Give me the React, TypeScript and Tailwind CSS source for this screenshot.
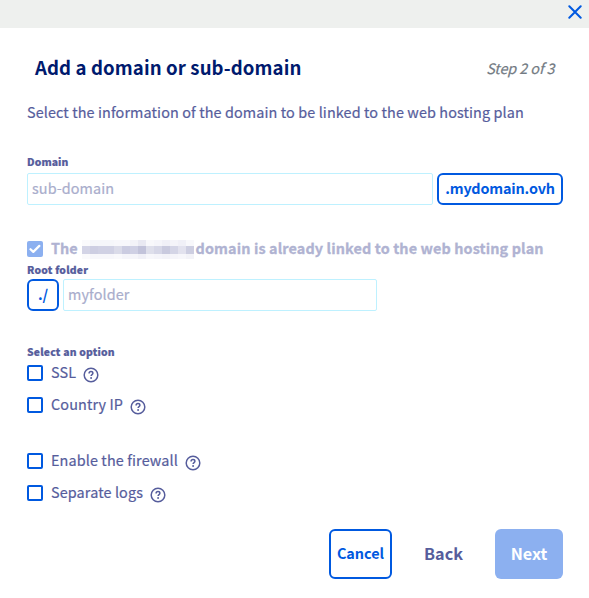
import React from "react";

const mosaic: string[][] = [
  ["bg-[#fafafc]", "bg-[#f5f6fa]", "bg-[#f5f6fa]", "bg-[#f5f6fa]", "bg-[#f7f7fb]", "bg-[#f7f7fb]", "bg-[#f3f3f8]", "bg-[#e9e9f2]", "bg-[#f8f8fb]", "bg-[#f5f5fa]", "bg-[#f0f0f7]", "bg-[#f4f4f9]", "bg-[#f0f0f7]", "bg-[#f8f8fb]"],
  ["bg-[#d3d4e6]", "bg-[#cdcee2]", "bg-[#d0d1e4]", "bg-[#d0d1e4]", "bg-[#dadbe9]", "bg-[#cbcce1]", "bg-[#cfd0e4]", "bg-[#c2c3da]", "bg-[#dedfeb]", "bg-[#d6d7e7]", "bg-[#c9cade]", "bg-[#d4d5e6]", "bg-[#e2e2ee]", "bg-[#cdcee1]"],
  ["bg-[#fafafc]", "bg-[#f7f7fb]", "bg-[#f7f7fb]", "bg-[#f7f7fb]", "bg-[#f9f9fc]", "bg-[#f5f5fa]", "bg-[#f5f5fa]", "bg-[#f0f0f7]", "bg-[#f7f7fb]", "bg-[#f5f5fa]", "bg-[#f3f3f8]", "bg-[#f5f5fa]", "bg-[#f7f7fb]", "bg-[#f3f3f8]"],
];

function HelpIcon() {
  return (
    <svg width="16" height="16" viewBox="0 0 16 16" fill="none" stroke="#565d9c" strokeWidth="1.5" className="mt-[3px]">
      <circle cx="8" cy="8" r="6.8" />
      <path d="M6.1 6.4C6.1 5.2 6.9 4.6 8 4.6s1.9.7 1.9 1.7c0 1.3-1.8 1.3-1.8 2.7" strokeWidth="1.5" />
      <circle cx="8.1" cy="11" r=".95" fill="#565d9c" stroke="none" />
    </svg>
  );
}

function Option({ label }: { label: string }) {
  return (
    <label className="flex h-8 items-center">
      <span className="size-4 rounded-[2px] border-2 border-[#0059e0]" />
      <span className="ml-2 mr-[7px] pb-0.5 text-[14.4px] tracking-[0.12px] [-webkit-text-stroke:0.2px]">{label}</span>
      <HelpIcon />
    </label>
  );
}

export default function App() {
  return (
    <div className="h-[598px] w-[589px] bg-white font-['Noto_Sans_CJK_SC',sans-serif] leading-6 text-[#565d9c]">
      <header className="flex h-7 items-start justify-end bg-[#eef0ee] pr-[7px] pt-[5px]">
        <svg width="14" height="14" viewBox="0 0 14 14" stroke="#0059e0" strokeWidth="2" strokeLinecap="round">
          <path d="M1.3 1.3l11.4 11.4M12.7 1.3L1.3 12.7" />
        </svg>
      </header>
      <main className="pl-[27px] pr-[26px]">
        <div className="flex h-[72px] items-center justify-between pl-2 pr-[8.5px] pt-[7px]">
          <h1 className="pb-0.5 text-[18.6px] font-bold tracking-[0.11px] text-[#001a6e]">Add a domain or sub-domain</h1>
          <span className="text-[14.4px] italic tracking-[-0.1px] text-[#737b83] [-webkit-text-stroke:0.2px]">Step 2 of 3</span>
        </div>
        <p className="whitespace-nowrap text-[14.4px] tracking-[0.11px] [-webkit-text-stroke:0.2px]">Select the information of the domain to be linked to the web hosting plan</p>
        <div className="mt-7 h-[21px] text-[10.4px] font-black leading-[19px] tracking-[0.1px] [-webkit-text-stroke:0.2px]">Domain</div>
        <div className="flex h-8 gap-1">
          <input placeholder="sub-domain" className="w-[406px] rounded-[2px] border border-[#bef1ff] px-1 pb-0.5 text-[14.4px] tracking-[0.08px] placeholder:text-[#a9adcc] [-webkit-text-stroke:0.2px]" />
          <button className="w-[126px] rounded-[6px] border-2 border-[#0059e0] pb-0.5 text-[14.4px] font-bold tracking-[-0.17px] text-[#0059e0]">.mydomain.ovh</button>
        </div>
        <div className="mt-8 flex h-6 items-center whitespace-nowrap text-[14.4px] font-bold text-[#b0b3d2]">
          <span className="flex size-4 items-center justify-center rounded-[2px] bg-[#8cb0f0]">
            <svg width="12" height="10" viewBox="0 0 12 10" fill="none" stroke="white" strokeWidth="2.2" strokeLinecap="round" strokeLinejoin="round"><path d="M1.5 5.2l2.8 2.7 6-6" /></svg>
          </span>
          <span className="ml-2 pb-0.5 [-webkit-text-stroke:0.3px]">The</span>
          <span className="ml-1 grid w-[112px] grid-cols-14 overflow-hidden">
            {mosaic.flat().map((c, i) => <span key={i} className={(i >= 28 ? "h-[5px] " : i >= 14 ? "h-2 " : "h-1.5 ") + c} />)}
          </span>
          <span className="ml-0.5 pb-0.5 tracking-[0.12px] [-webkit-text-stroke:0.3px]">domain is already linked to the web hosting plan</span>
        </div>
        <div className="h-[18px] text-[10.4px] font-black leading-[18px] tracking-[0.2px] [-webkit-text-stroke:0.2px]">Root folder</div>
        <div className="flex h-8 gap-1">
          <button className="w-8 rounded-[6px] border-2 border-[#0059e0] pb-0.5 text-[14.4px] font-bold text-[#0059e0]">./</button>
          <input placeholder="myfolder" className="w-[314px] rounded-[2px] border border-[#bef1ff] px-1 pb-0.5 text-[14.4px] tracking-[0.1px] placeholder:text-[#a9adcc] [-webkit-text-stroke:0.2px]" />
        </div>
        <div className="mt-8 h-[14px] text-[10.4px] font-black leading-[18px] tracking-[0.18px] [-webkit-text-stroke:0.2px]">Select an option</div>
        <Option label="SSL" />
        <Option label="Country IP" />
        <div className="h-6" />
        <Option label="Enable the firewall" />
        <Option label="Separate logs" />
        <div className="mt-5 flex h-[50px] justify-end">
          <button className="w-[63px] rounded-[6px] border-2 border-[#0059e0] pb-0.5 text-[14.4px] font-bold text-[#0059e0]">Cancel</button>
          <button className="w-[103px] pb-0.5 text-[16.2px] font-bold">Back</button>
          <button className="w-[68px] rounded-[6px] bg-[#8cb0f0] pb-0.5 text-[16.2px] font-bold text-white">Next</button>
        </div>
      </main>
    </div>
  );
}
